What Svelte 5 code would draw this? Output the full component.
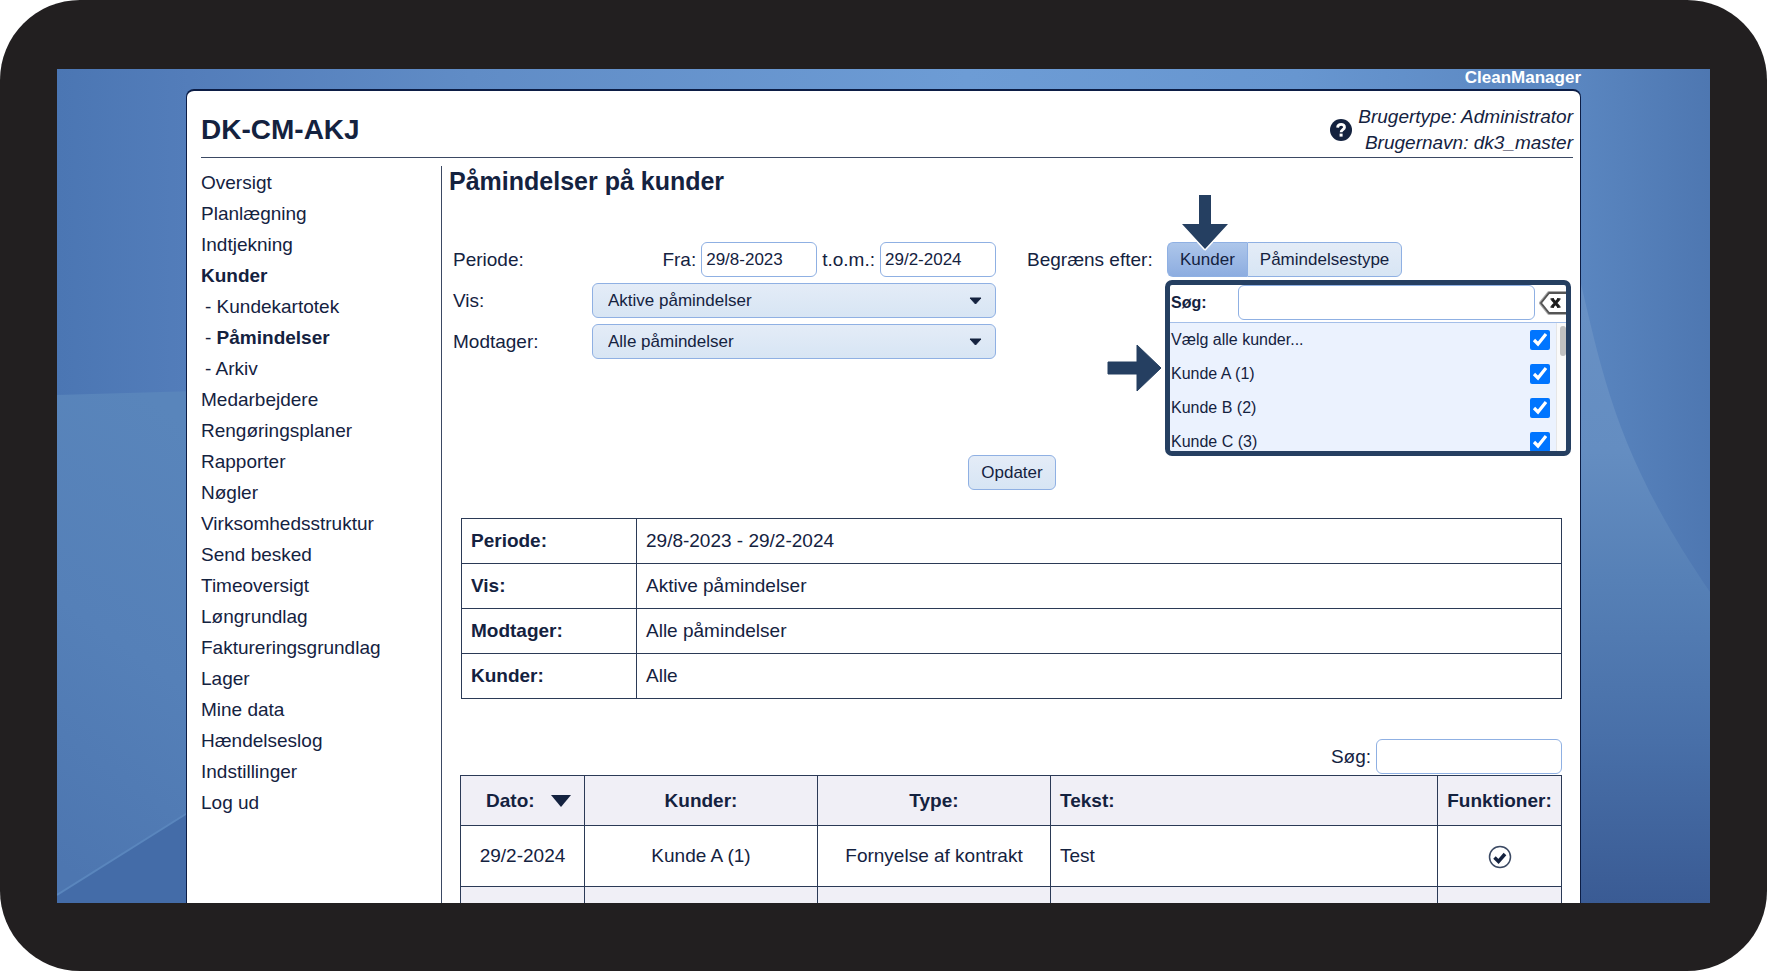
<script>
    const menu = [
        { name: "Oversigt" },
        { name: "Planlægning" },
        { name: "Indtjekning" },
        { name: "Kunder", active: true },
        { name: "Kundekartotek", sub: true },
        { name: "Påmindelser", sub: true, active: true },
        { name: "Arkiv", sub: true },
        { name: "Medarbejdere" },
        { name: "Rengøringsplaner" },
        { name: "Rapporter" },
        { name: "Nøgler" },
        { name: "Virksomhedsstruktur" },
        { name: "Send besked" },
        { name: "Timeoversigt" },
        { name: "Løngrundlag" },
        { name: "Faktureringsgrundlag" },
        { name: "Lager" },
        { name: "Mine data" },
        { name: "Hændelseslog" },
        { name: "Indstillinger" },
        { name: "Log ud" }
    ];

    let from = $state("29/8-2023");
    let to = $state("29/2-2024");
    let show = $state("Aktive påmindelser");
    let receiver = $state("Alle påmindelser");
    let tab = $state("Kunder");

    let customers = $state([
        { name: "Vælg alle kunder...", checked: true },
        { name: "Kunde A (1)", checked: true },
        { name: "Kunde B (2)", checked: true },
        { name: "Kunde C (3)", checked: true },
    ]);

    let summary = $derived([
        ["Periode:", from + " - " + to],
        ["Vis:", show],
        ["Modtager:", receiver],
        ["Kunder:", "Alle"]
    ]);

    const rows = [
        { date: "29/2-2024", customer: "Kunde A (1)", type: "Fornyelse af kontrakt", text: "Test" },
        { date: "", customer: "", type: "", text: "" }
    ];
</script>

<div class="device">
    <div class="screen">
        <svg class="backdrop" viewBox="0 0 1653 834" preserveAspectRatio="none" aria-hidden="true">
            <defs>
                <linearGradient id="top" x1="0" y1="0" x2="1" y2="0">
                    <stop offset="0" stop-color="#4b76b3" />
                    <stop offset="0.08" stop-color="#537dba" />
                    <stop offset="0.25" stop-color="#608cc6" />
                    <stop offset="0.55" stop-color="#6d9cd5" />
                    <stop offset="0.75" stop-color="#6796d0" />
                    <stop offset="0.92" stop-color="#5a86c0" />
                    <stop offset="1" stop-color="#4e77b1" />
                </linearGradient>
                <linearGradient id="left" x1="0.6" y1="0" x2="0.4" y2="1">
                    <stop offset="0" stop-color="#5985bb" />
                    <stop offset="0.5" stop-color="#5580b8" />
                    <stop offset="1" stop-color="#4d76b0" />
                </linearGradient>
                <linearGradient id="right" x1="0" y1="0" x2="0" y2="1">
                    <stop offset="0" stop-color="#6991c5" />
                    <stop offset="0.3" stop-color="#648dc1" />
                    <stop offset="0.5" stop-color="#5680b6" />
                    <stop offset="0.75" stop-color="#486fa8" />
                    <stop offset="1" stop-color="#3a5b94" />
                </linearGradient>
            </defs>
            <rect width="1653" height="834" fill="url(#top)" />
            <path d="M0 326 L140 322 V834 H0 Z" fill="url(#left)" />
            <path d="M0 826 L140 738 V834 H0 Z" fill="#446ca8" />
            <path d="M0 826 L140 738" stroke="#5a86bd" stroke-width="2" />
            <path d="M1518 190 C1545 300 1555 380 1653 523 V834 H1518 Z" fill="url(#right)" />
        </svg>

        <div class="brand">CleanManager</div>

        <div class="page">
            <header>
                <div class="company">DK-CM-AKJ</div>
                <a class="help" href="#help" aria-label="Hjælp">
                    <svg width="22" height="22" viewBox="0 0 22 22">
                        <circle cx="11" cy="11" r="11" fill="#14223f" />
                        <path d="M7.6 8.6 C7.8 4.2 14.8 4.4 14.5 8.4 C14.3 10.6 11.2 10.8 11.1 13.2" fill="none" stroke="#fff" stroke-width="2.8" />
                        <rect x="9.6" y="14.6" width="3" height="3" fill="#fff" />
                    </svg>
                </a>
                <div class="user">
                    Brugertype: Administrator<br />
                    Brugernavn: dk3_master
                </div>
            </header>

            <div class="body">
                <nav>
                    {#each menu as item}
                        <div class="item" class:sub={item.sub}>
                            {#if item.sub}-{/if}
                            <a href="#{item.name}" class:active={item.active}>{item.name}</a>
                        </div>
                    {/each}
                </nav>

                <main>
                    <h1>Påmindelser på kunder</h1>

                    <form onsubmit={(e) => e.preventDefault()}>
                        <div class="fields">
                            <span>Periode:</span>
                            <div class="period">
                                <label for="from">Fra:</label>
                                <input id="from" type="text" bind:value={from} />
                                <label for="to">t.o.m.:</label>
                                <input id="to" type="text" bind:value={to} />
                            </div>

                            <label for="show">Vis:</label>
                            <div class="select">
                                <select id="show" bind:value={show}>
                                    <option>Aktive påmindelser</option>
                                </select>
                                <svg width="13" height="8" viewBox="0 0 13 8"><path d="M1 1 H12 L6.5 7 Z" fill="#14223f" stroke="#14223f" stroke-linejoin="round" /></svg>
                            </div>

                            <label for="receiver">Modtager:</label>
                            <div class="select">
                                <select id="receiver" bind:value={receiver}>
                                    <option>Alle påmindelser</option>
                                </select>
                                <svg width="13" height="8" viewBox="0 0 13 8"><path d="M1 1 H12 L6.5 7 Z" fill="#14223f" stroke="#14223f" stroke-linejoin="round" /></svg>
                            </div>
                        </div>

                        <div class="limit">
                            <span class="limit-label">Begræns efter:</span>
                            <div class="facet">
                                <div class="tabs">
                                    {#each ["Kunder", "Påmindelsestype"] as name}
                                        <button type="button" class:on={tab === name} onclick={() => (tab = name)}>{name}</button>
                                    {/each}
                                </div>

                                <div class="panel">
                                    <div class="find">
                                        <label for="find">Søg:</label>
                                        <input id="find" type="text" />
                                        <button type="button" class="clear" aria-label="Ryd">
                                            <svg width="30" height="24" viewBox="0 0 30 24">
                                                <path d="M10 2 H34 V22 H10 L2 12 Z" fill="#fff" stroke="#aaa" stroke-width="4" stroke-linejoin="round" />
                                                <path d="M10 2 H34 V22 H10 L2 12 Z" fill="#fff" stroke="#555" stroke-width="2" stroke-linejoin="round" />
                                                <path d="M13 8 L20 16 M20 8 L13 16" stroke="#1c1c1c" stroke-width="3" />
                                                <path d="M11.5 8 H15 M18 8 H21.5 M11.5 16 H15 M18 16 H21.5" stroke="#1c1c1c" stroke-width="1.5" />
                                            </svg>
                                        </button>
                                    </div>
                                    <div class="list">
                                        <div class="options">
                                            {#each customers as c}
                                                <label>
                                                    {c.name}
                                                    <input type="checkbox" bind:checked={c.checked} />
                                                </label>
                                            {/each}
                                        </div>
                                        <div class="track"><div class="thumb"></div></div>
                                    </div>
                                </div>

                                <svg class="arrow down" width="52" height="60" viewBox="0 0 52 60">
                                    <path d="M20 2 H32 V31 H49 L26 56 L3 31 H20 Z" fill="#253f61" stroke="#fff" stroke-width="3" stroke-linejoin="round" paint-order="stroke" />
                                </svg>
                                <svg class="arrow side" width="55" height="48" viewBox="0 0 55 48">
                                    <path d="M1 18 H30 V1 L54 24 L30 47 V30 H1 Z" fill="#253f61" stroke="#253f61" stroke-linejoin="round" />
                                </svg>
                            </div>
                        </div>

                        <button type="submit" class="update">Opdater</button>
                    </form>

                    <table class="summary">
                        <tbody>
                            {#each summary as [name, value]}
                                <tr><th scope="row">{name}</th><td>{value}</td></tr>
                            {/each}
                        </tbody>
                    </table>

                    <div class="search">
                        <label for="search">Søg:</label>
                        <input id="search" type="text" />
                    </div>

                    <table class="reminders">
                        <thead>
                            <tr>
                                <th class="date">
                                    Dato:
                                    <svg width="20" height="12" viewBox="0 0 20 12"><path d="M0 0 H20 L10 12 Z" fill="#14223f" /></svg>
                                </th>
                                <th>Kunder:</th>
                                <th>Type:</th>
                                <th class="text">Tekst:</th>
                                <th class="func">Funktioner:</th>
                            </tr>
                        </thead>
                        <tbody>
                            {#each rows as row}
                                <tr>
                                    <td>{row.date}</td>
                                    <td>{row.customer}</td>
                                    <td>{row.type}</td>
                                    <td class="text">{row.text}</td>
                                    <td>
                                        <button type="button" class="done" aria-label="Udført">
                                            <svg width="24" height="24" viewBox="0 0 24 24">
                                                <circle cx="12" cy="12" r="10.5" fill="none" stroke="#3b4963" stroke-width="1.5" />
                                                <path d="M6.5 12.5 L10.5 16.5 L17 9" fill="none" stroke="#14223f" stroke-width="3.5" />
                                            </svg>
                                        </button>
                                    </td>
                                </tr>
                            {/each}
                        </tbody>
                    </table>
                </main>
            </div>
        </div>
    </div>
</div>

<style>
    :global(body) {
        background: #fff;
    }

    .device {
        --text: #14223f;
        --line: #8fb0e3;
        box-sizing: border-box;
        height: 100vh;
        padding: 69px 57px 68px;
        border-radius: 80px;
        background: #221f20;
        color: var(--text);
        font: 19px/26px "Liberation Sans", Arial, sans-serif;
    }

    .screen {
        position: relative;
        display: flex;
        flex-direction: column;
        box-sizing: border-box;
        height: 100%;
        padding: 0 129px;
        overflow: hidden;
    }

    .backdrop {
        position: absolute;
        top: 0;
        left: 0;
        width: 100%;
        height: 100%;
    }

    .brand {
        position: relative;
        color: #fff;
        font-size: 17px;
        font-weight: bold;
        line-height: 18px;
        padding-bottom: 2px;
        text-align: right;
    }

    .page {
        position: relative;
        flex: 1 0 auto;
        display: flex;
        flex-direction: column;
        padding: 0 7px 0 14px;
        border: 1px solid #0c1d45;
        border-top-width: 2px;
        border-bottom: 0;
        border-radius: 8px 8px 0 0;
        background: #fff;
    }

    header {
        display: flex;
        align-items: center;
        padding: 13px 0 1px;
        border-bottom: 1px solid #3b4963;
    }

    .company {
        flex: 1;
        font-size: 28px;
        font-weight: bold;
    }

    .help {
        display: flex;
        margin-right: 6px;
    }

    .user {
        font-style: italic;
        text-align: right;
    }

    .body {
        flex: 1;
        display: flex;
        padding-top: 8px;
    }

    nav {
        flex: 0 0 240px;
        padding-top: 1px;
        box-sizing: border-box;
    }

    .item {
        line-height: 31px;
    }

    .sub {
        padding-left: 4px;
    }

    a {
        color: inherit;
        text-decoration: none;
    }

    .active {
        font-weight: bold;
    }

    main {
        flex: 1;
        min-width: 0;
        padding-left: 7px;
        border-left: 1px solid #3b4963;
    }

    h1 {
        margin: 0 0 45px;
        font-size: 25px;
        line-height: 31px;
    }

    form {
        display: flex;
        flex-wrap: wrap;
        align-items: flex-start;
        justify-content: space-between;
        padding: 0 2px 0 4px;
    }

    input, select, button {
        box-sizing: border-box;
        margin: 0;
        color: inherit;
        font: inherit;
    }

    input[type="text"] {
        height: 35px;
        min-width: 0;
        padding: 0 4px;
        border: 1px solid var(--line);
        border-radius: 6px;
        background: #fff;
        font-size: 17px;
    }

    .fields {
        display: grid;
        grid-template-columns: 139px 404px;
        grid-auto-rows: 35px;
        row-gap: 6px;
        align-items: center;
    }

    .period {
        display: flex;
        align-items: center;
        justify-content: flex-end;
        gap: 5px;
    }

    .period input {
        width: 116px;
    }

    .select {
        position: relative;
    }

    .select svg {
        position: absolute;
        top: 14px;
        right: 14px;
        pointer-events: none;
    }

    select, .tabs button, .update {
        height: 35px;
        border: 1px solid var(--line);
        border-radius: 6px;
        background: linear-gradient(#e4ecf7, #d7e5f4);
        font-size: 17px;
    }

    select {
        display: block;
        width: 100%;
        padding: 0 15px;
        appearance: none;
    }

    .limit {
        display: flex;
        align-items: center;
    }

    .limit-label {
        width: 140px;
    }

    .facet {
        position: relative;
        width: 404px;
    }

    .tabs {
        display: flex;
    }

    .tabs button {
        padding: 0 12px;
    }

    .tabs button:first-child {
        border-right: 0;
        border-radius: 6px 0 0 6px;
    }

    .tabs button:last-child {
        border-radius: 0 6px 6px 0;
    }

    .tabs .on {
        background: linear-gradient(#adc6ea, #8dade0);
    }

    .panel {
        position: absolute;
        top: 38px;
        left: -2px;
        right: 0;
        box-sizing: border-box;
        height: 176px;
        overflow: hidden;
        border: 5px solid #253f61;
        border-radius: 7px;
        background: #fff;
        font-size: 16px;
    }

    .find {
        display: flex;
        align-items: center;
        padding-bottom: 2px;
        border-bottom: 1px solid #a4bfe9;
    }

    .find label {
        flex: 0 0 68px;
        padding-left: 1px;
        box-sizing: border-box;
        font-weight: bold;
    }

    .find input {
        flex: 1;
    }

    .clear {
        width: 31px;
        padding: 0 0 0 4px;
        border: 0;
        background: none;
        overflow: hidden;
    }

    .clear svg {
        display: block;
    }

    .list {
        display: flex;
    }

    .options {
        flex: 1;
        background: #ebf2fe;
    }

    .options label {
        display: flex;
        align-items: center;
        justify-content: space-between;
        height: 34px;
        padding: 0 6px 0 1px;
    }

    .options input {
        width: 20px;
        height: 20px;
        accent-color: #0075ff;
    }

    .track {
        width: 9px;
        border-left: 1px solid #e6e6e6;
        background: #fafafa;
    }

    .thumb {
        height: 30px;
        margin: 3px 0 0 3px;
        border-radius: 3px;
        background: #c1c1c1;
    }

    /* pointers drawn on top of the form */
    .arrow {
        position: absolute;
        pointer-events: none;
    }

    .down {
        top: -49px;
        left: 12px;
    }

    .side {
        top: 102px;
        left: -60px;
    }

    .update {
        margin: 96px auto 0;
        padding: 0 12px;
    }

    table {
        border-collapse: collapse;
    }

    th, td {
        padding: 0 9px;
        border: 1px solid #2b3a56;
    }

    .summary {
        width: calc(100% - 23px);
        margin: 28px 11px 40px 12px;
        text-align: left;
    }

    .summary tr {
        height: 45px;
    }

    .summary th {
        width: 156px;
    }

    .search {
        display: flex;
        align-items: center;
        justify-content: flex-end;
        gap: 5px;
        margin: 0 11px 1px;
    }

    .search input {
        width: 186px;
    }

    .reminders {
        width: calc(100% - 22px);
        margin: 0 11px;
        table-layout: fixed;
        text-align: center;
    }

    .reminders th {
        height: 50px;
        background: #f0eff6;
    }

    .reminders td {
        height: 61px;
    }

    .reminders th, .reminders td {
        width: 233px;
        box-sizing: border-box;
        padding: 0;
    }

    .reminders .date, .reminders .func {
        width: 124px;
    }

    .reminders .date {
        padding-left: 12px;
    }

    .date svg {
        margin-left: 11px;
    }

    .reminders .text {
        width: auto;
        padding-left: 9px;
        text-align: left;
    }

    .reminders tbody tr:nth-child(even) {
        background: #f0eff6;
    }

    .done {
        display: inline-flex;
        padding: 0;
        border: 0;
        background: none;
        vertical-align: middle;
    }
</style>
